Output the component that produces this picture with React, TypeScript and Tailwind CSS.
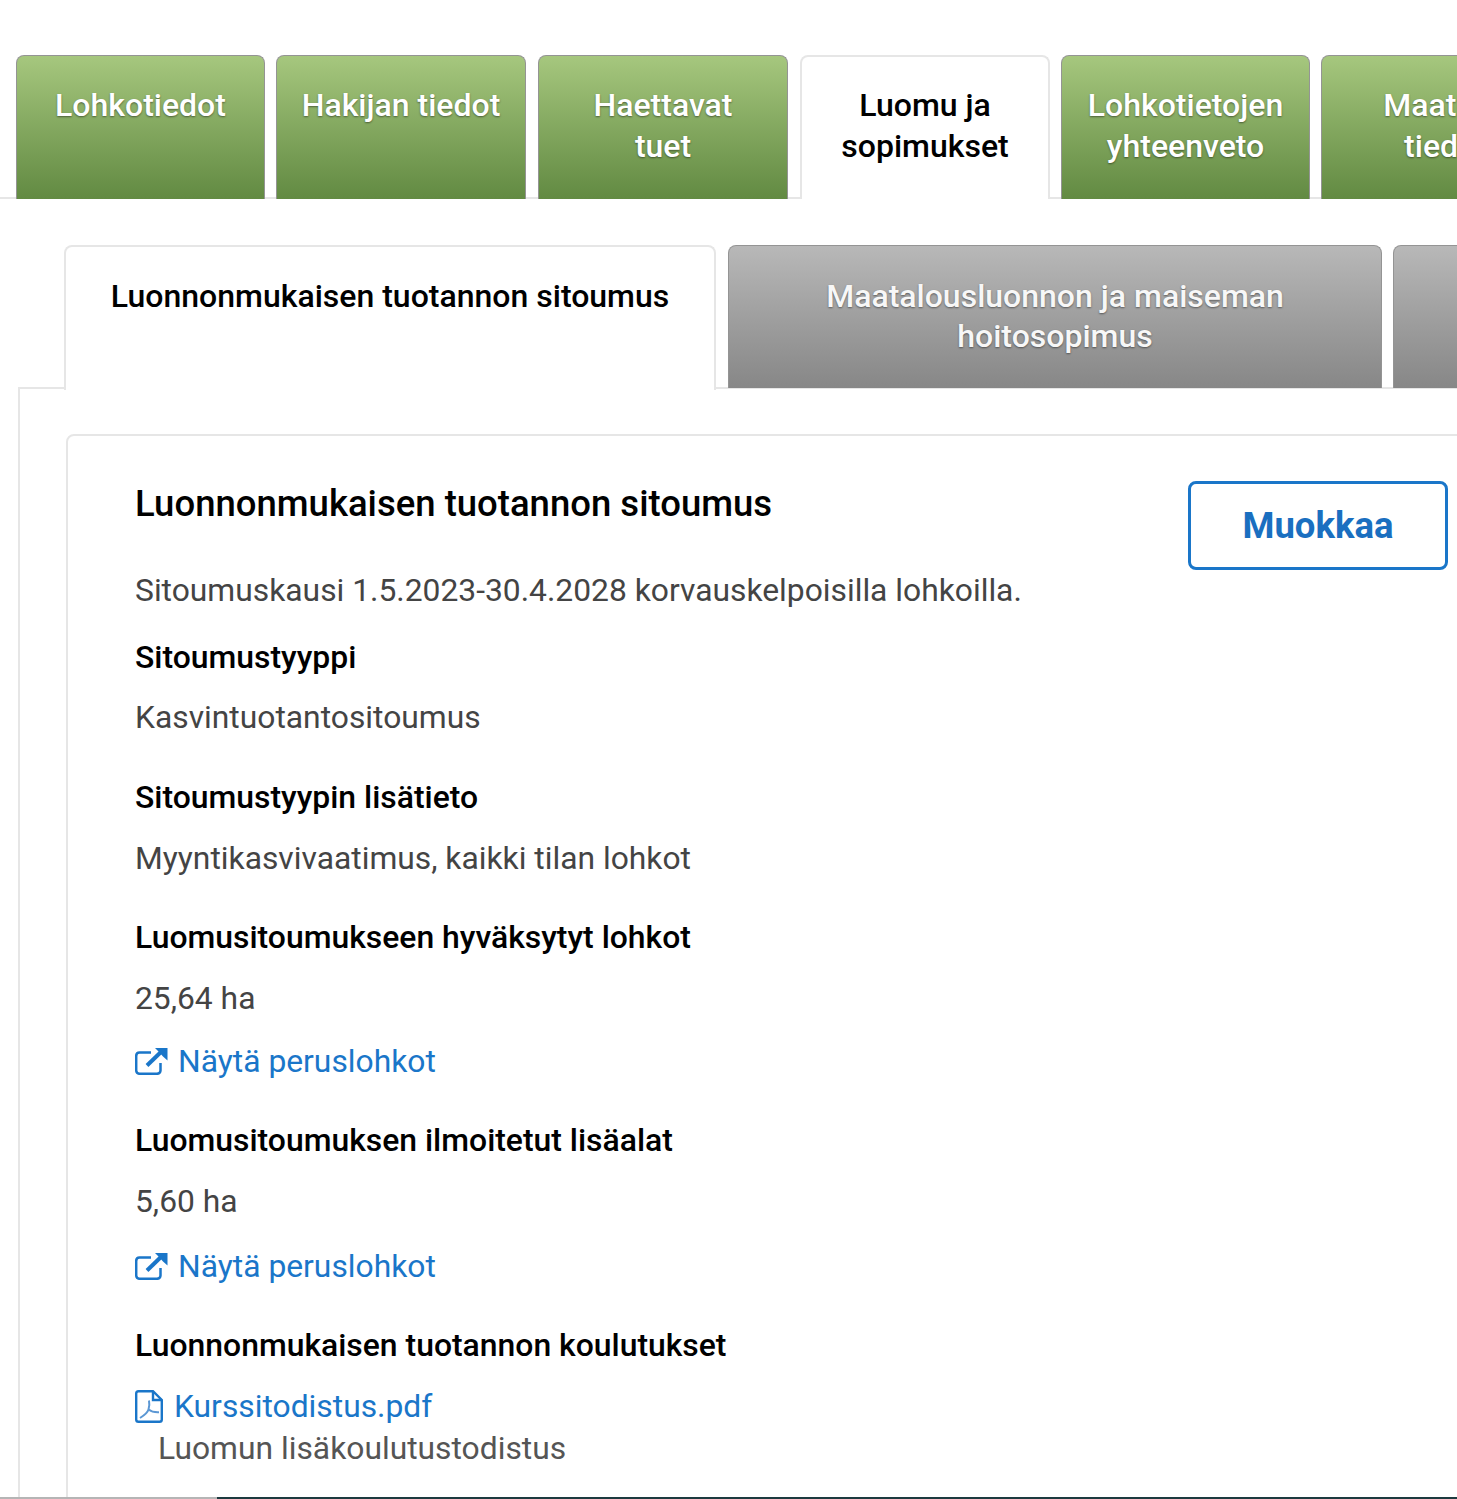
const green =
  "bg-gradient-to-b from-[#a6c77e] to-[#628a42] border border-b-0 border-[#949494] text-white [text-shadow:0_1px_2px_rgba(0,0,0,0.45)]";
const grey =
  "bg-gradient-to-b from-[#b8b8b8] to-[#878787] border border-b-0 border-[#949494] text-[#f7f7f7] [text-shadow:0_1px_2px_rgba(0,0,0,0.45)]";
const activeTab = "bg-white border-2 border-b-0 border-[#e6e6e6] text-black";

const topTabs = [
  { t: "Lohkotiedot", w: "w-[249px]", ml: "ml-[16px]", c: `${green} pt-[29px]` },
  { t: "Hakijan tiedot", w: "w-[250px]", ml: "ml-[11px]", c: `${green} pt-[29px]` },
  { t: "Haettavat tuet", w: "w-[250px]", ml: "ml-[12px]", c: `${green} pt-[29px]` },
  { t: "Luomu ja sopimukset", w: "w-[250px]", ml: "ml-[12px]", c: `${activeTab} pt-[28px]` },
  { t: "Lohkotietojen yhteenveto", w: "w-[249px]", ml: "ml-[11px]", c: `${green} pt-[29px]` },
  { t: "Maatilan tiedot", w: "w-[249px]", ml: "ml-[11px]", c: `${green} pt-[29px]` },
];

const innerTabs = [
  { t: "Luonnonmukaisen tuotannon sitoumus", w: "w-[652px]", ml: "", c: `${activeTab} h-[145px] pt-[28.500px]` },
  { t: "Maatalousluonnon ja maiseman hoitosopimus", w: "w-[654px]", ml: "ml-[12px]", c: `${grey} h-[143px] pt-[29.500px]` },
  { t: "", w: "w-[300px]", ml: "ml-[11px]", c: `${grey} h-[143px] pt-[29.500px]` },
];

function ExternalIcon() {
  return (
    <svg viewBox="0 0 33 28" className="w-[33px] h-[28px] mr-[10px] shrink-0" fill="none">
      <path
        d="M16 5.500H4.500A3.500 3.500 0 0 0 1.200 9v14.500A3.500 3.500 0 0 0 4.500 26.800H22a3.500 3.500 0 0 0 3.500-3.300V16"
        stroke="#1a76c9"
        strokeWidth="2.500"
      />
      <path d="M12 18.500 27 4" stroke="#1a76c9" strokeWidth="4" />
      <path d="M20 1H32.500V13.500L28 9.500 24 5Z" fill="#1a76c9" />
    </svg>
  );
}

function PdfIcon() {
  return (
    <svg viewBox="0 0 28 33" className="w-[28px] h-[33px] mr-[11px] shrink-0" fill="none">
      <path
        d="M3.500 1.200H18L26.800 10V29.500A2.300 2.300 0 0 1 24.500 31.800H3.500A2.300 2.300 0 0 1 1.200 29.500V3.500A2.300 2.300 0 0 1 3.500 1.200Z"
        stroke="#1a76c9"
        strokeWidth="2.400"
      />
      <path d="M18 1.200V10H26.800" stroke="#1a76c9" strokeWidth="2.400" />
      <path
        d="M5 28C9 25.500 12.500 23 13.500 19.500C14.500 16 14.500 13 14 10.500M13.500 19.500C16 21.500 20 22.500 24 22.300"
        stroke="#5b97d4"
        strokeWidth="2"
      />
    </svg>
  );
}

function Label({ children, mt }: { children: React.ReactNode; mt: string }) {
  return <div className={`${mt} text-[31.900px] leading-[42px] font-medium text-black`}>{children}</div>;
}

function Value({ children, mt }: { children: React.ReactNode; mt: string }) {
  return <div className={`${mt} text-[31.800px] leading-[42px] text-[#444444]`}>{children}</div>;
}

function ExtLink({ mt }: { mt: string }) {
  return (
    <div className={`${mt} flex items-center text-[31.800px] leading-[42px] text-[#1a76c9]`}>
      <ExternalIcon />
      <span>Näytä peruslohkot</span>
    </div>
  );
}

export default function App() {
  return (
    <div className="w-[1457px] h-[1499px] overflow-hidden relative bg-white font-['Roboto',sans-serif]">
      <div className="h-[55px]" />
      <div className="flex h-[144px] border-b-2 border-[#e6e6e6] w-[1700px]">
        {topTabs.map((x) => (
          <div
            key={x.t}
            className={`${x.w} ${x.ml} ${x.c} h-[144px] shrink-0 rounded-t-[8px] px-[23px] text-center text-[32px] leading-[41px] font-medium`}
          >
            {x.t}
          </div>
        ))}
      </div>

      <div className="mt-[46px] ml-[18px] w-[1600px]">
        <div className="flex pl-[46px] h-[143px] -mb-px relative z-10">
          {innerTabs.map((x, i) => (
            <div
              key={i}
              className={`${x.w} ${x.ml} ${x.c} shrink-0 rounded-t-[8px] px-[40px] text-center text-[32px] leading-[40px] font-medium`}
            >
              {x.t}
            </div>
          ))}
        </div>
        <div className="border-l-2 border-t-2 border-[#e6e6e6] pl-[46px] pt-[45px] h-[1200px]">
          <div className="border-2 border-[#e6e6e6] rounded-[8px] w-[1500px] h-[1200px] pl-[67px] pt-[46px] relative">
            <div className="absolute left-[1120px] top-[45px] w-[260px] h-[89px] pt-[1px] border-[3px] border-[#1a76c9] rounded-[8px] flex items-center justify-center text-[36.500px] font-bold text-[#1a6fc0]">
              Muokkaa
            </div>
            <h2 className="text-[36.500px] leading-[44px] font-medium text-black">Luonnonmukaisen tuotannon sitoumus</h2>
            <Value mt="mt-[43px]">Sitoumuskausi 1.5.2023-30.4.2028 korvauskelpoisilla lohkoilla.</Value>
            <Label mt="mt-[25px]">Sitoumustyyppi</Label>
            <Value mt="mt-[18px]">Kasvintuotantositoumus</Value>
            <Label mt="mt-[38px]">Sitoumustyypin lisätieto</Label>
            <Value mt="mt-[19px]">Myyntikasvivaatimus, kaikki tilan lohkot</Value>
            <Label mt="mt-[37px]">Luomusitoumukseen hyväksytyt lohkot</Label>
            <Value mt="mt-[19px]">25,64 ha</Value>
            <ExtLink mt="mt-[21px]" />
            <Label mt="mt-[37px]">Luomusitoumuksen ilmoitetut lisäalat</Label>
            <Value mt="mt-[19px]">5,60 ha</Value>
            <ExtLink mt="mt-[23px]" />
            <Label mt="mt-[37px]">Luonnonmukaisen tuotannon koulutukset</Label>
            <div className="mt-[19px] flex items-center text-[31.800px] leading-[42px] text-[#1a76c9]">
              <PdfIcon />
              <span>Kurssitodistus.pdf</span>
            </div>
            <div className="ml-[23px] text-[31.800px] leading-[42px] text-[#555555]">Luomun lisäkoulutustodistus</div>
          </div>
        </div>
      </div>

      <div className="absolute left-0 right-0 bottom-0 h-[2px] flex">
        <div className="w-[217px] bg-[#b5b5b5]" />
        <div className="flex-1 bg-[#1d3a3f]" />
      </div>
    </div>
  );
}
